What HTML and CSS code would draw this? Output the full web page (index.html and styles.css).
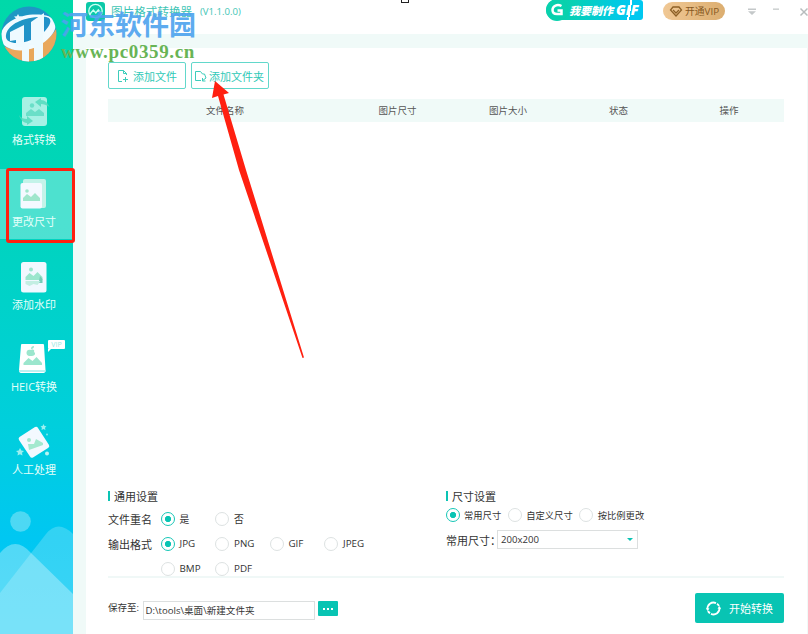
FILE: index.html
```html
<!DOCTYPE html>
<html lang="zh-CN">
<head>
    <meta charset="UTF-8">
    <meta name="viewport" content="width=device-width, initial-scale=1.0">
    <title>图片格式转换器</title>
    <link rel="stylesheet" href="styles.css">
</head>
<body>

    <div class="app">
        <aside class="sidebar">
            <nav class="menu">
                <a class="menu-item">
                    <svg width="34" height="32" viewBox="0 0 34 32">
                        <rect x="5" y="1" width="25" height="29" rx="3" fill="#fff" opacity=".65"/>
                        <circle cx="15" cy="9.500" r="2.200" fill="#6adfc8"/>
                        <path d="M9 20v-3l5-4 4 3 4-3 5 4v3z" fill="#6adfc8"/>
                        <path d="M18 6l6-4 0 2c4 0 7 3 8.500 7-3-2-6-3-8.500-3v3zM2 19c2 3 5 4 8 4v-3l6 5-6 4v-2c-4 0-7-4-8-8z" fill="#4fd9ba" opacity=".8"/>
                    </svg>
                    <span>格式转换</span>
                </a>
                <a class="menu-item active">
                    <svg width="34" height="32" viewBox="0 0 34 32">
                        <rect x="6" y="1" width="23" height="29" rx="2" fill="#c4f3e9"/>
                        <rect x="3.500" y="5" width="21.500" height="25.500" rx="2" fill="#f4f9ff"/>
                        <circle cx="10" cy="13" r="1.800" fill="#a0e6cc"/>
                        <path d="M6 23v-3l4-4 4 3 4-4 5 5v3z" fill="#a0e6cc"/>
                    </svg>
                    <span>更改尺寸</span>
                </a>
                <a class="menu-item">
                    <svg width="34" height="32" viewBox="0 0 34 32">
                        <rect x="4" y="1" width="25.500" height="30.500" rx="2.500" fill="#f1f8ff"/>
                        <circle cx="14" cy="8.500" r="2" fill="#9be6cd"/>
                        <path d="M8.500 19v-3l4-4 4 3 4-4 5 5v3z" fill="#9be6cd"/>
                        <path d="M16 20h6l1-5 2.500 3v4h-8z" fill="#76cbb7"/>
                        <path d="M8.500 20h15l-3 4-4-1-4 2-4-2z" fill="#c3eee3"/>
                    </svg>
                    <span>添加水印</span>
                </a>
                <a class="menu-item">
                    <svg width="34" height="32" viewBox="0 0 34 32">
                        <path d="M5 1h21q1 0 1 1l1.500 25q0 3-2 3H4q-2 0-2-3L4 2q0-1 1-1z" fill="#fff"/>
                        <path d="M2 27h26.500v2H2z" fill="#bdf0f0"/>
                        <path d="M14 7c-5-2-6 5-2 6h3c3 0 4-3 2-4 1-2-1-3-3-2zM14 6c0-2 1-3 3-3 0 2-1 3-3 3z" fill="#9be6cd"/>
                        <path d="M6.500 22v-2l5-5 4 3 4-4 5.500 6v2z" fill="#9be6cd"/>
                    </svg>
                    <b class="vip-tag">VIP</b>
                    <span>HEIC转换</span>
                </a>
                <a class="menu-item">
                    <svg width="34" height="32" viewBox="0 0 34 32">
                        <path d="M2.500 11L18 1q2-1 3 1l11 17q1 2-1 3L16 31.500q-2 1-3-1L2 14q-1-2 .5-3z" fill="#f3f9ff"/>
                        <circle cx="12" cy="14" r="2" fill="#a3e9cf"/>
                        <path d="M12 24l-1-6 6 0 2-5 7 4 0 2z" fill="#a3e9cf"/>
                        <path d="M26.500-2l1 2 2 .3-1.500 1.500.4 2.200-1.900-1-2 1 .4-2.200L23.500.300l2-.3zM3 22l1.300 2.500 2.700.4-2 1.900.5 2.700L3 28.200.500 29.500l.5-2.700-2-1.900 2.700-.4z" fill="#9beff0"/>
                        <circle cx="30" cy="8.500" r="1" fill="#7fe6ec"/>
                        <circle cx="30" cy="27.500" r="2" fill="#b9f4f2"/>
                    </svg>
                    <span>人工处理</span>
                </a>
            </nav>
            <svg class="scenery" width="73" height="128" viewBox="0 0 73 128">
                <circle cx="20.500" cy="15.500" r="10.300" fill="#fff" opacity=".3"/>
                <path d="M0 87L46 28q12-15 27 0v100H0z" fill="#fff" opacity=".2"/>
                <path d="M0 47q15-18 31 0l42 41v40H0z" fill="#fff" opacity=".32"/>
            </svg>
        </aside>

        <div class="main">
            <header class="title-bar">
                <svg class="app-icon" width="19" height="19" viewBox="0 0 19 19">
                    <rect width="19" height="19" rx="3" fill="#0bc9a8"/>
                    <circle cx="9.500" cy="9" r="6.700" fill="none" stroke="#c9fff2" stroke-width="1.300"/>
                    <path d="M4 12l3.300-4 2.500 3 2.500-3 3 4" fill="none" stroke="#c9fff2" stroke-width="1.400"/>
                </svg>
                <h1>图片格式转换器</h1>
                <span class="version">(V1.1.0.0)</span>
                <i class="marker"></i>
                <a class="gif-link">
                    <svg width="22" height="22" viewBox="0 0 22 22">
                        <circle cx="11" cy="11" r="11" fill="#08d1ad"/>
                        <path d="M15.500 7c-4-2-9-.5-9 4 0 3 2 4 4.500 4h4.500v-3.500h-4" fill="none" stroke="#fff" stroke-width="2.500"/>
                    </svg>
                    <span>我要制作</span>
                    <em>GIF</em>
                </a>
                <a class="vip-link">
                    <svg width="12" height="11" viewBox="0 0 12 11">
                        <path d="M3 1h6l2.500 3L6 10 .500 4zM3 4l3 3 3-3" fill="none" stroke="#8d6026" stroke-width="1.300"/>
                    </svg>
                    开通VIP
                </a>
                <div class="window-tools">
                    <svg width="8" height="7" viewBox="0 0 8 7"><path d="M0 .5h8v1.500H0zM0 3.200h8L4 7z" fill="#c4c8c9"/></svg>
                    <svg width="8" height="7" viewBox="0 0 8 7"><path d="M1 .5h6v1.300H1z" fill="#c4c8c9"/></svg>
                    <svg class="close" width="8" height="8" viewBox="0 0 8 8"><path d="M.500.500l7 7M7.500.500l-7 7" stroke="#b8bdbe" stroke-width="1.500"/></svg>
                </div>
            </header>

            <div class="content">
                <div class="toolbar">
                    <button class="outline-btn">
                        <svg width="12" height="14" viewBox="0 0 12 14"><path d="M5 12.500H1.500v-11h5l3 3V6M6.500 1.500v3h3M8.500 8v5M6 10.500h5" fill="none" stroke="#3dcdbb" stroke-width="1"/></svg>
                        添加文件
                    </button>
                    <button class="outline-btn folder">
                        <svg width="12" height="12" viewBox="0 0 12 12"><path d="M6 10.500H.500v-9h5l2 2.500h2l1.500 4-4 3M7.500 8v3h3" fill="none" stroke="#3dcdbb" stroke-width="1"/></svg>
                        添加文件夹
                    </button>
                </div>

                <div class="table-head">
                    <span>文件名称</span>
                    <span>图片尺寸</span>
                    <span>图片大小</span>
                    <span>状态</span>
                    <span>操作</span>
                </div>
                <div class="file-list"></div>

                <div class="settings">
                    <section class="general">
                        <h2>通用设置</h2>
                        <div class="option-row">
                            <span class="label">文件重名</span>
                            <label class="radio checked">是</label>
                            <label class="radio">否</label>
                        </div>
                        <div class="option-row">
                            <span class="label">输出格式</span>
                            <label class="radio checked">JPG</label>
                            <label class="radio">PNG</label>
                            <label class="radio">GIF</label>
                            <label class="radio">JPEG</label>
                            <span class="label"></span>
                            <label class="radio">BMP</label>
                            <label class="radio">PDF</label>
                        </div>
                    </section>
                    <section class="size">
                        <h2>尺寸设置</h2>
                        <div class="size-modes">
                            <label class="radio checked">常用尺寸</label>
                            <label class="radio">自定义尺寸</label>
                            <label class="radio">按比例更改</label>
                        </div>
                        <div class="size-select">
                            <span>常用尺寸：</span>
                            <div class="select">200x200<i></i></div>
                        </div>
                    </section>
                </div>

                <footer>
                    <span class="save-label">保存至:</span>
                    <div class="path">D:\tools\桌面\新建文件夹</div>
                    <button class="browse"><i></i><i></i><i></i></button>
                    <button class="start">
                        <svg width="15" height="15" viewBox="0 0 15 15" fill="none" stroke="#fff" stroke-width="1.800">
                            <path d="M1.600 8.500A6 6 0 0 1 10 2.100M13.400 6.500A6 6 0 0 1 5 12.900M2 10A6 6 0 0 0 4 12.300M13 5A6 6 0 0 0 11 2.700"/>
                            <path d="M0 7l3.500.5L1.500 10zM15 8L11.500 7.500l2-2.500z" fill="#fff" stroke="none"/>
                        </svg>
                        开始转换
                    </button>
                </footer>
            </div>
        </div>
    </div>

    <!-- Watermark -->
    <div class="watermark">
        <svg width="58" height="58" viewBox="0 0 58 58">
            <defs>
                <linearGradient id="ball" x1="0" y1="0" x2="1" y2="1">
                    <stop offset="0" stop-color="#1c9cc0"/>
                    <stop offset="1" stop-color="#2588d0"/>
                </linearGradient>
                <clipPath id="round"><circle cx="29" cy="29" r="27.500"/></clipPath>
            </defs>
            <circle cx="29" cy="29" r="27.500" fill="url(#ball)"/>
            <g clip-path="url(#round)">
                <path d="M0 38C15 52 48 42 57 22v36H0z" fill="#e9a75c"/>
                <path d="M1 37C-3 20 18 7 43 10c16 2 16 14 5 24-13 13-37 16-47 3zm5-7c-2 13 27 9 39-4 9-10 6-15-4-14C24 12 8 19 6 30z" fill="#f2fbff" fill-rule="evenodd"/>
                <path d="M10 27l14-7v18h7V17l13-9v20l-1 2v27h-9V40h-5v18h-7V42h-6v-7l-6 1z" fill="#eefaff"/>
            </g>
            <path d="M18 9l1.200 2.300 2.800.2-2 2 .4 2.500-2.400-1.200-2.400 1.200.4-2.500-2-2 2.800-.2z" fill="#eafaff"/>
        </svg>
        <div class="watermark-text">
            <strong>河东软件园</strong>
            <span>www.pc0359.cn</span>
        </div>
    </div>

    <!-- Annotations -->
    <div class="highlight-box"></div>
    <svg class="arrow" width="100" height="284" viewBox="0 0 100 284">
        <path d="M10 1l14 12-5.500 1.500L41 90l58 187.500-1.500.5L34 90 13 16l-6 2z" fill="#ff2010"/>
    </svg>

</body>
</html>
```
FILE: styles.css
```css
* {
    margin: 0;
    padding: 0;
    box-sizing: border-box;
}
body {
    font-family: "Open Sans", "Noto Sans CJK SC", sans-serif;
    font-size: 11px;
    color: #444;
    background-color: #fff;
    overflow: hidden;
}
button {
    font-family: inherit;
    border: none;
}
h1, h2 {
    font-weight: 400;
}
svg {
    display: block;
    flex: none;
    overflow: visible;
}
.app {
    display: flex;
    width: 808px;
    height: 634px;
    white-space: nowrap;
}

/* Sidebar */
.sidebar {
    display: flex;
    flex-direction: column;
    justify-content: space-between;
    width: 73px;
    flex: none;
    padding-top: 87px;
    background: linear-gradient(#00d9a9, #00d4bd 35%, #00cfdc 67%, #00c7f2 85%, #08cbf5);
}
.menu {
    display: flex;
    flex-direction: column;
    gap: 12.400px;
}
.menu-item {
    position: relative;
    display: flex;
    flex-direction: column;
    align-items: center;
    height: 70px;
    padding: 9px 5px 0 0;
    font-size: 11px;
    line-height: 16px;
    color: #e4fffa;
}
.menu-item svg {
    height: 32px;
}
.menu-item span {
    margin-top: 4px;
}
.menu-item.active {
    background-color: rgba(255, 255, 255, 0.3);
}
.vip-tag {
    position: absolute;
    left: 48px;
    top: 6px;
    width: 17px;
    height: 9px;
    border-radius: 1px;
    background-color: #fff;
    color: #95e8df;
    font-size: 7px;
    font-weight: 400;
    line-height: 9px;
    text-align: center;
}
.vip-tag::after {
    content: "";
    position: absolute;
    left: 0;
    top: 9px;
    border-top: 3px solid #fff;
    border-right: 3px solid transparent;
}

/* Title bar */
.main {
    display: flex;
    flex-direction: column;
    flex: 1;
    min-width: 0;
    background-color: #f0faf8;
}
.title-bar {
    display: flex;
    align-items: flex-start;
    height: 34px;
    padding-left: 13px;
    background-color: #fff;
    color: #3fc5b5;
}
.app-icon {
    margin-top: 2px;
}
.title-bar h1 {
    width: 81px;
    margin-left: 6px;
    font-size: 11.600px;
    line-height: 24px;
}
.version {
    width: 42px;
    margin-left: 8px;
    font-size: 9.600px;
    line-height: 24px;
}
.marker {
    width: 8px;
    height: 3px;
    margin-left: 159px;
    border: 1px solid #222;
    border-top: none;
}
.gif-link {
    display: flex;
    align-items: center;
    width: 97px;
    height: 20px;
    margin-left: 137px;
    border-radius: 10px 3px 3px 10px;
    background: linear-gradient(100deg, #08d1ad 20%, #00c8f0 84%, #fff 84%, #fff 86%, #00c8f0 86%);
    color: #fff;
    font-size: 11px;
    font-weight: 900;
    font-style: italic;
}
.gif-link span {
    margin-left: 1px;
}
.gif-link em {
    margin-left: 3px;
    font-size: 14px;
    line-height: 20px;
    font-weight: 800;
}
.vip-link {
    display: flex;
    align-items: center;
    gap: 3px;
    width: 62px;
    height: 18px;
    margin: 2px 0 0 20px;
    padding-left: 7px;
    border-radius: 9px;
    background: linear-gradient(90deg, #f0c895, #dcae70);
    color: #86581f;
    font-size: 9.800px;
}
.window-tools {
    display: flex;
    gap: 16px;
    margin: 8px 0 0 23px;
}
.close {
    margin-left: 4px;
}

/* Content */
.content {
    display: flex;
    flex-direction: column;
    flex: 1;
    margin: 14px 1px 0 13px;
    padding: 14px 23px 0 22px;
    background-color: #fff;
}
.toolbar {
    display: flex;
    gap: 5.500px;
}
.outline-btn {
    display: flex;
    align-items: center;
    gap: 4px;
    width: 77.500px;
    height: 27px;
    padding-left: 8px;
    border: 1px solid #62d8cb;
    border-radius: 2px;
    background-color: #fff;
    color: #2fc9b7;
    font-size: 11px;
}
.outline-btn.folder {
    gap: 2px;
    padding-left: 3px;
}
.table-head {
    display: grid;
    grid-template-columns: 234px 111px 110px 111px 110px;
    height: 23px;
    margin-top: 10px;
    background-color: #f0faf8;
    color: #555;
    font-size: 9.500px;
    line-height: 23px;
    text-align: center;
}
.file-list {
    height: 363px;
}

/* Settings */
.settings {
    display: flex;
    height: 93px;
    border-bottom: 2px solid #f0f8f7;
}
.general {
    width: 338px;
}
.settings h2 {
    display: flex;
    align-items: center;
    gap: 4px;
    height: 21px;
    font-size: 11px;
    color: #333;
}
.settings h2::before {
    content: "";
    width: 2px;
    height: 10px;
    background-color: #0bc4b4;
}
.option-row {
    display: grid;
    grid-template-columns: 53px 54.500px 54.500px 54.500px 60px;
    grid-auto-rows: 25px;
    align-items: center;
    font-size: 9.800px;
}
.label {
    font-size: 11px;
    color: #333;
}
.radio {
    display: flex;
    align-items: center;
    gap: 5px;
    color: #333;
}
.radio::before {
    content: "";
    width: 12px;
    height: 12px;
    margin-left: -0.500px;
    border: 1px solid #dde2e2;
    border-radius: 50%;
}
.radio.checked::before {
    border-color: #16c6b6;
    background: radial-gradient(circle, #08c4b3 2.800px, #fff 3.400px);
}
.size-modes {
    display: flex;
    height: 18px;
    gap: 7px;
    font-size: 9.300px;
}
.size-modes .radio {
    gap: 4.500px;
}
.size-select {
    display: flex;
    align-items: center;
    margin-top: 6px;
}
.size-select span {
    width: 51px;
    font-size: 11px;
    color: #333;
}
.select {
    display: flex;
    align-items: center;
    justify-content: space-between;
    width: 141px;
    height: 19px;
    padding: 0 4px 0 3px;
    border: 1px solid #dcdfdf;
    font-size: 9.600px;
    color: #333;
}
.select i {
    border: 3px solid transparent;
    border-top-color: #0bc4b4;
    border-bottom: none;
}

/* Footer */
footer {
    display: flex;
    align-items: flex-start;
    padding-top: 15px;
}
.save-label {
    width: 34.500px;
    margin-top: 7px;
    font-size: 9.500px;
    line-height: 16px;
    color: #333;
}
.path {
    width: 172px;
    height: 19px;
    margin-top: 8px;
    padding-left: 2px;
    border: 1px solid #dcdfdf;
    font-size: 9.600px;
    line-height: 17px;
    color: #333;
}
.browse {
    display: flex;
    align-items: center;
    justify-content: center;
    gap: 2px;
    width: 20px;
    height: 15px;
    margin: 8px 0 0 3px;
    border-radius: 1px;
    background-color: #08c4b3;
}
.browse i {
    width: 2px;
    height: 2px;
    background-color: #fff;
}
.start {
    display: flex;
    align-items: center;
    gap: 8px;
    width: 89px;
    height: 30px;
    margin-left: auto;
    padding-left: 11px;
    border-radius: 2px;
    background-color: #08c4b3;
    color: #fff;
    font-size: 11px;
}

/* Overlays */
.watermark {
    position: absolute;
    left: 0;
    top: 5px;
    display: flex;
    gap: 3px;
    white-space: nowrap;
}
.watermark-text {
    display: flex;
    flex-direction: column;
}
.watermark strong {
    font-family: "Noto Sans CJK SC", sans-serif;
    font-size: 27px;
    line-height: 37px;
    color: #4da3ee;
    opacity: 0.9;
}
.watermark span {
    font-family: "Liberation Serif", serif;
    font-size: 19px;
    font-weight: 700;
    line-height: 20px;
    letter-spacing: 0.650px;
    color: #68b455;
}
.highlight-box {
    position: absolute;
    left: 6px;
    top: 168px;
    width: 69px;
    height: 75px;
    border: 3px solid #ff2010;
    border-radius: 3px;
}
.arrow {
    position: absolute;
    left: 205px;
    top: 80px;
}
```
